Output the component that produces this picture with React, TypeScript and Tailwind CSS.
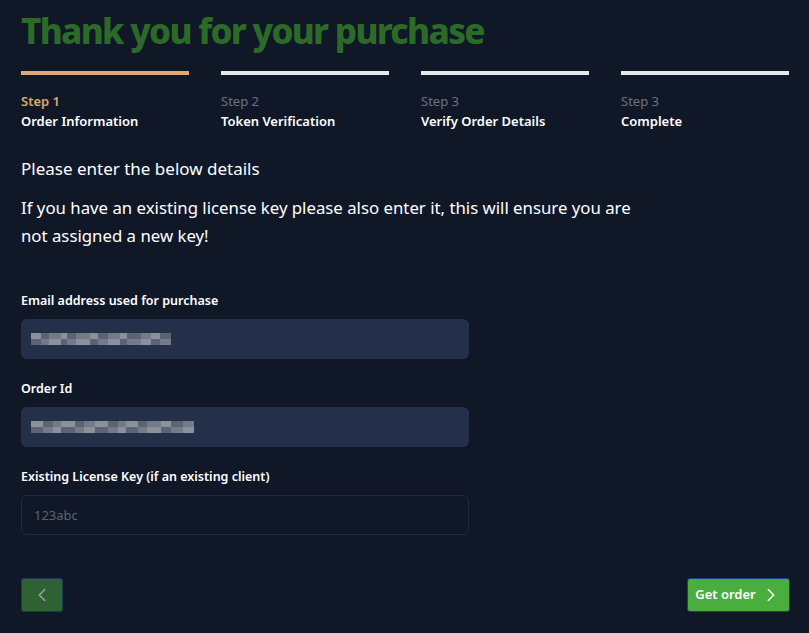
import { ChevronLeft, ChevronRight } from "lucide-react";

const STEPS = [
  { step: "Step 1", title: "Order Information", active: true },
  { step: "Step 2", title: "Token Verification", active: false },
  { step: "Step 3", title: "Verify Order Details", active: false },
  { step: "Step 3", title: "Complete", active: false },
];

function Blurred({ widths }: { widths: number[] }) {
  // pixelated placeholder for redacted values
  return (
    <div className="flex flex-col gap-0">
      {[0, 1].map((row) => (
        <div key={row} className="flex h-[6px]">
          {widths.map((w, i) => (
            <span
              key={i}
              className={
                (i + row) % 3 === 0
                  ? "bg-[#8a909c]"
                  : (i + row) % 3 === 1
                  ? "bg-[#5c6474]"
                  : "bg-[#737a88]"
              }
              style={{ width: w }}
            />
          ))}
        </div>
      ))}
    </div>
  );
}

export default function App() {
  return (
    <div className="min-h-[633px] w-full bg-[#101828] px-[21px] pt-[8px] font-['Noto_Sans',sans-serif] text-white">
      <h1 className="text-[35px] font-extrabold leading-[46px] tracking-[-1.7px] text-[#2c6a27]">
        Thank you for your purchase
      </h1>

      {/* Steps */}
      <div className="mt-[17px] grid w-[768px] grid-cols-4 gap-x-[32px]">
        {STEPS.map((s, i) => (
          <div key={i}>
            <div className={`h-[4px] ${s.active ? "bg-[#dcaa6e]" : "bg-[#e5e7eb]"}`} />
            <p
              className={`mt-[16px] text-[13px] leading-[20px] ${
                s.active ? "font-semibold text-[#dcaa6e]" : "text-[#6b7280]"
              }`}
            >
              {s.step}
            </p>
            <p className="text-[13px] font-semibold leading-[20px] text-white">{s.title}</p>
          </div>
        ))}
      </div>

      <p className="mt-[26px] text-[17px] leading-[24px] text-white">Please enter the below details</p>
      <p className="mt-[13px] w-[620px] text-[16.8px] leading-[28px] text-white">
        If you have an existing license key please also enter it, this will ensure you are not assigned a new key!
      </p>

      {/* Form */}
      <div className="mt-[41px] flex w-[448px] flex-col">
        <label className="text-[12.5px] font-semibold leading-[20px] text-white">
          Email address used for purchase
        </label>
        <div className="mt-[8px] flex h-[40px] items-center rounded-md bg-[#243049] px-[10px]">
          <Blurred widths={[10, 8, 12, 6, 9, 14, 8, 10, 12, 7, 14, 10, 9, 11]} />
        </div>

        <label className="mt-[20px] text-[12.5px] font-semibold leading-[20px] text-white">Order Id</label>
        <div className="mt-[8px] flex h-[40px] items-center rounded-md bg-[#243049] px-[10px]">
          <Blurred widths={[12, 10, 8, 14, 9, 11, 13, 10, 8, 12, 9, 14, 10, 12, 11]} />
        </div>

        <label className="mt-[20px] text-[12.5px] font-semibold leading-[20px] text-white">
          Existing License Key (if an existing client)
        </label>
        <input
          placeholder="123abc"
          className="mt-[8px] h-[40px] rounded-md border border-[#1f2a3d] bg-transparent px-[12px] text-[13px] text-white placeholder-[#5b6372] outline-none"
        />
      </div>

      {/* Buttons */}
      <div className="mt-[43px] flex w-[769px] items-center justify-between pb-[21px]">
        <button className="flex h-[34px] w-[42px] items-center justify-center rounded-[3px] border border-[#1e3a5f] bg-[#2e6233]">
          <ChevronLeft className="h-[22px] w-[22px] text-[#9ca3af]" strokeWidth={1.5} />
        </button>
        <button className="flex h-[34px] w-[103px] items-center justify-center gap-[4px] rounded-[3px] border border-[#1e3a8a] bg-[#4aae3f] text-[13px] font-semibold text-white">
          Get order
          <ChevronRight className="h-[22px] w-[22px] text-white" strokeWidth={1.5} />
        </button>
      </div>
    </div>
  );
}
